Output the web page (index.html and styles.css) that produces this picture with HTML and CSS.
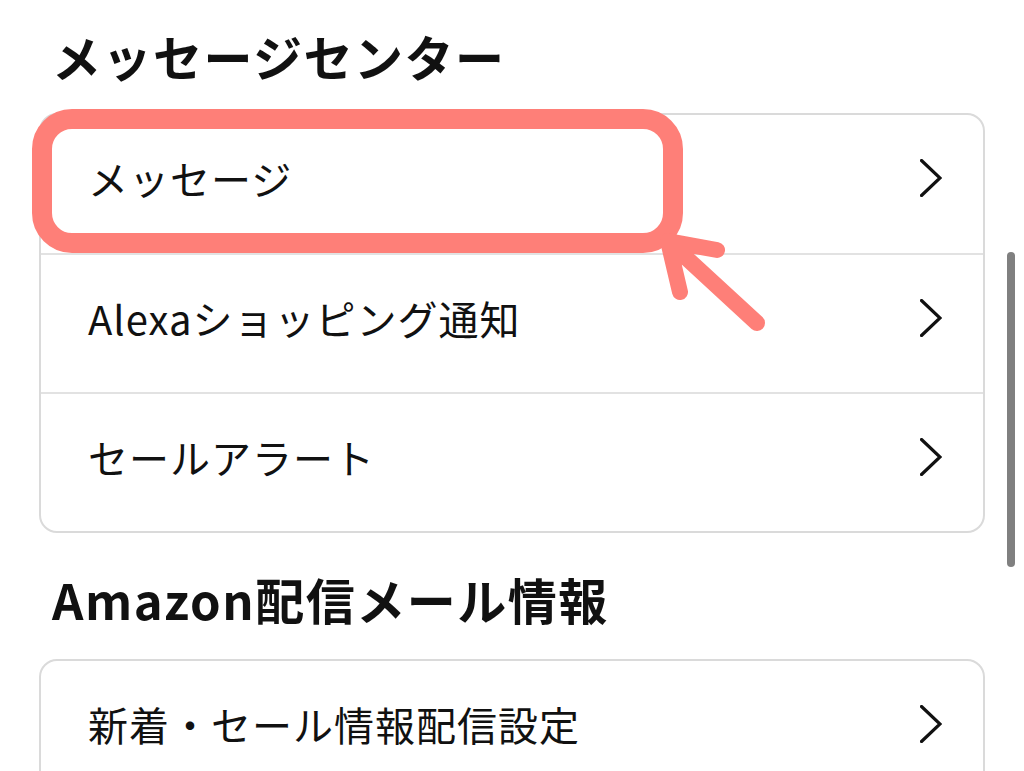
FILE: index.html
```html
<!DOCTYPE html>
<html lang="ja">
<head>
<meta charset="utf-8">
<title>メッセージセンター</title>
<link rel="stylesheet" href="styles.css">
</head>
<body>
<main class="page">
  <h2 class="section-title first">メッセージセンター</h2>
  <ul class="card">
    <li class="row"><span class="label">メッセージ</span><svg class="chev" viewBox="0 0 22 38" width="22" height="38"><polyline points="1.5,1.5 20,19 1.5,36.5" fill="none" stroke="#111" stroke-width="3.2" stroke-linecap="round" stroke-linejoin="miter"/></svg></li>
    <li class="row"><span class="label">Alexaショッピング通知</span><svg class="chev" viewBox="0 0 22 38" width="22" height="38"><polyline points="1.5,1.5 20,19 1.5,36.5" fill="none" stroke="#111" stroke-width="3.2" stroke-linecap="round" stroke-linejoin="miter"/></svg></li>
    <li class="row"><span class="label">セールアラート</span><svg class="chev" viewBox="0 0 22 38" width="22" height="38"><polyline points="1.5,1.5 20,19 1.5,36.5" fill="none" stroke="#111" stroke-width="3.2" stroke-linecap="round" stroke-linejoin="miter"/></svg></li>
  </ul>
  <h2 class="section-title second">Amazon配信メール情報</h2>
  <ul class="card open">
    <li class="row"><span class="label">新着・セール情報配信設定</span><svg class="chev" viewBox="0 0 22 38" width="22" height="38"><polyline points="1.5,1.5 20,19 1.5,36.5" fill="none" stroke="#111" stroke-width="3.2" stroke-linecap="round" stroke-linejoin="miter"/></svg></li>
  </ul>
</main>
<svg class="annotation" viewBox="0 0 1024 771" width="1024" height="771">
  <rect x="42" y="119" width="631" height="124" rx="30" ry="30" fill="none" stroke="#FE7F78" stroke-width="20"/>
  <path d="M757 323 L668 241 M668 241 L717 250 M668 241 L680 292" fill="none" stroke="#FE7F78" stroke-width="16" stroke-linecap="round" stroke-linejoin="round"/>
</svg>
<div class="scrollbar"></div>
</body>
</html>
```
FILE: styles.css
```css
html, body {
  margin: 0;
  padding: 0;
  background: #ffffff;
  overflow: hidden;
  height: 771px;
}
body {
  position: relative;
  font-family: "Noto Sans CJK JP", "Noto Sans", sans-serif;
  color: #111111;
}
.page {
  padding: 0 39px 0 39px;
}
.section-title {
  font-size: 49px;
  font-weight: 700;
  line-height: 72px;
  height: 72px;
  margin: 0;
  padding-left: 13px;
  letter-spacing: 1.5px;
}
.section-title.first {
  margin-top: 20px;
  margin-bottom: 21px;
}
.section-title.second {
  margin-top: 30px;
  margin-bottom: 24px;
}
.card {
  list-style: none;
  margin: 0;
  padding: 0;
  border: 2px solid #dadada;
  border-radius: 18px;
}
.card.open {
  height: 200px;
}
.row {
  display: flex;
  align-items: center;
  justify-content: space-between;
  box-sizing: border-box;
  height: 139px;
  padding: 0 41px 12px 47px;
  border-top: 2px solid #e2e2e2;
}
.row:first-child {
  border-top: none;
  height: 138px;
}
.label {
  font-size: 40px;
  font-weight: 400;
  letter-spacing: 1px;
  line-height: 1;
}
.chev {
  display: block;
  flex: none;
}
.annotation {
  position: absolute;
  left: 0;
  top: 0;
  pointer-events: none;
}
.scrollbar {
  position: absolute;
  left: 1007px;
  top: 252px;
  width: 8px;
  height: 315px;
  border-radius: 4px;
  background: #808080;
}
```
